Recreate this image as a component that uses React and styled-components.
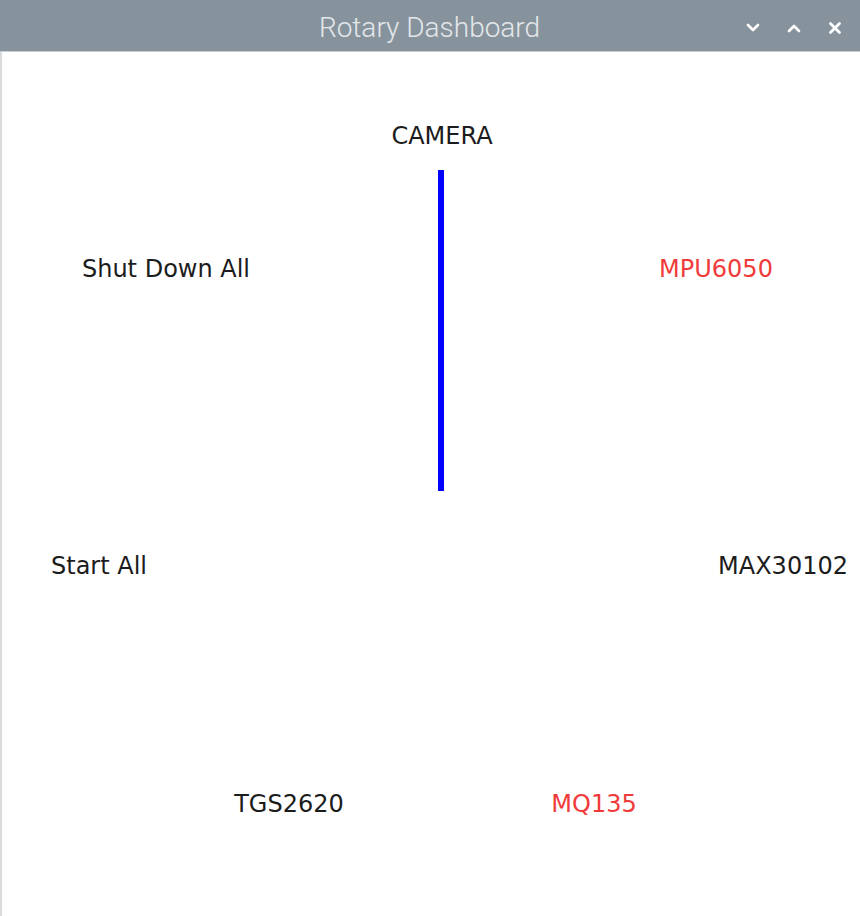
import React from 'react';
import styled, { createGlobalStyle } from 'styled-components';

const GlobalStyle = createGlobalStyle`
  html, body {
    margin: 0;
    padding: 0;
    background: #ffffff;
  }
  #root {
    width: 860px;
    height: 916px;
  }
`;

const Window = styled.div`
  width: 860px;
  height: 916px;
  display: flex;
  flex-direction: column;
  overflow: hidden;
`;

const TitleBar = styled.div`
  height: 51px;
  flex-shrink: 0;
  background: #87939c;
  border-bottom: 1px solid #c9ced3;
  display: flex;
  align-items: center;
  justify-content: center;
  position: relative;
`;

const Title = styled.span`
  font-family: Roboto, "Liberation Sans", sans-serif;
  font-weight: 300;
  font-size: 28px;
  color: #e4e7ea;
  margin-left: -1px;
  margin-top: 4px;
`;

const Controls = styled.div`
  position: absolute;
  right: 18px;
  top: 2px;
  height: 51px;
  display: flex;
  align-items: center;
  gap: 27px;
`;

const ControlButton = styled.div`
  width: 14px;
  height: 14px;
  display: flex;
  align-items: center;
  justify-content: center;
`;

const Canvas = styled.div`
  flex: 1;
  position: relative;
  background: #ffffff;
  border-left: 2px solid #d9dcdf;
`;

const NeedleLayer = styled.svg`
  position: absolute;
  left: -2px;
  top: 0;
  width: 860px;
  height: 864px;
`;

const Label = styled.span`
  position: absolute;
  transform: translate(-50%, -50%);
  white-space: nowrap;
  font-family: "DejaVu Sans", "Liberation Sans", sans-serif;
  font-size: 24px;
  color: ${(p) => (p.$active ? '#f03b3b' : '#1c1c1c')};
`;

// label centres, in window coordinates
const labels = [
  { text: 'CAMERA', x: 442, y: 136 },
  { text: 'Shut Down All', x: 166, y: 269 },
  { text: 'MPU6050', x: 716, y: 269, active: true },
  { text: 'Start All', x: 99, y: 566 },
  { text: 'MAX30102', x: 783, y: 566 },
  { text: 'TGS2620', x: 289, y: 804 },
  { text: 'MQ135', x: 594, y: 804, active: true },
];

const Chevron = ({ up }) => (
  <svg width="14" height="10" viewBox="0 0 14 10">
    <polyline
      points={up ? '2,8 7,3 12,8' : '2,2 7,7 12,2'}
      fill="none"
      stroke="#ffffff"
      strokeWidth="2.6"
      strokeLinecap="round"
      strokeLinejoin="round"
    />
  </svg>
);

const Close = () => (
  <svg width="14" height="14" viewBox="0 0 14 14">
    <path
      d="M2.5 2.5 L11.5 11.5 M11.5 2.5 L2.5 11.5"
      stroke="#ffffff"
      strokeWidth="2.8"
      strokeLinecap="round"
    />
  </svg>
);

const App = () => {
  return (
    <>
      <GlobalStyle />
      <Window>
        <TitleBar>
          <Title>Rotary Dashboard</Title>
          <Controls>
            <ControlButton><Chevron /></ControlButton>
            <ControlButton><Chevron up /></ControlButton>
            <ControlButton><Close /></ControlButton>
          </Controls>
        </TitleBar>
        <Canvas>
          <NeedleLayer viewBox="0 0 860 864">
            <line x1="441" y1="118" x2="441" y2="439" stroke="#0000ff" strokeWidth="6" />
          </NeedleLayer>
          {labels.map((l) => (
            <Label
              key={l.text}
              $active={l.active}
              style={{ left: l.x - 2, top: l.y - 52 }}
            >
              {l.text}
            </Label>
          ))}
        </Canvas>
      </Window>
    </>
  );
};

export default App;
